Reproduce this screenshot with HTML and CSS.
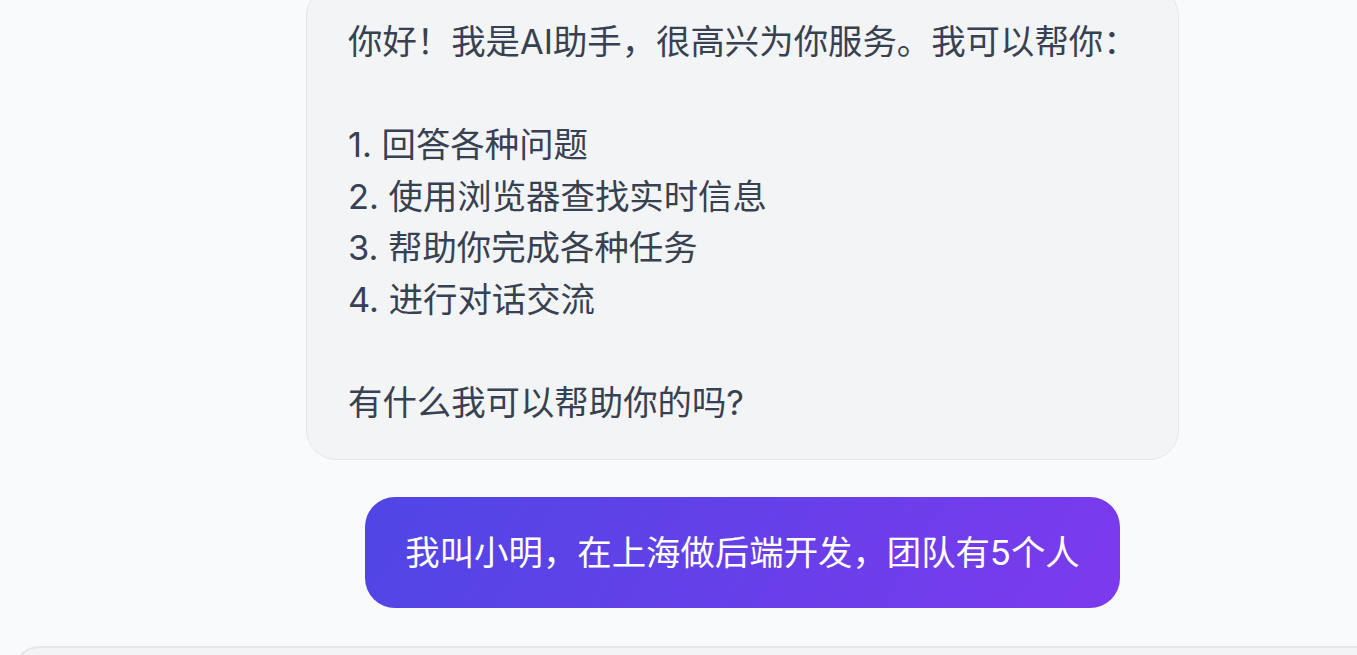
FILE: index.html
```html
<!DOCTYPE html>
<html lang="zh-CN">
<head>
<meta charset="utf-8">
<title>Chat</title>
<link rel="stylesheet" href="styles.css">
</head>
<body>
<div class="page">
  <div class="messages">
    <div class="bubble assistant">
      <p>你好！我是AI助手，很高兴为你服务。我可以帮你：</p>
      <p class="blank">&nbsp;</p>
      <p>1. 回答各种问题</p>
      <p>2. 使用浏览器查找实时信息</p>
      <p>3. 帮助你完成各种任务</p>
      <p>4. 进行对话交流</p>
      <p class="blank">&nbsp;</p>
      <p>有什么我可以帮助你的吗?</p>
    </div>
    <div class="bubble user">
      <p>我叫小明，在上海做后端开发，团队有5个人</p>
    </div>
  </div>
  <div class="composer"></div>
</div>
</body>
</html>
```

FILE: styles.css
```css
html, body {
  margin: 0;
  padding: 0;
  height: 655px;
  overflow: hidden;
  background: #f9fafb;
}

body {
  font-family: "Inter", "Noto Sans CJK SC", sans-serif;
  font-size: 34.4px;
  line-height: 1.5;
  color: #374151;
}

.page {
  display: flex;
  flex-direction: column;
}

.messages {
  width: 873px;
  margin-left: 306px;
  margin-top: -14px;
  display: flex;
  flex-direction: column;
  align-items: center;
  gap: 37px;
}

.bubble p {
  margin: 0;
}

.bubble.assistant {
  box-sizing: border-box;
  width: 873px;
  background: #f3f4f6;
  border: 1.5px solid #e5e7eb;
  border-radius: 30px;
  padding: 29px 12px 30px 41px;
}

.bubble.assistant p {
  white-space: nowrap;
}

.bubble.user {
  background: linear-gradient(120deg, #4f46e5 0%, #7c3aed 100%);
  color: #ffffff;
  border-radius: 30px;
  padding: 30px 40px;
  white-space: nowrap;
}

.composer {
  flex: none;
  margin-top: 38px;
  margin-left: 12px;
  width: 1420px;
  height: 120px;
  box-sizing: border-box;
  background: #f3f4f6;
  border: 2px solid #e5e7eb;
  border-radius: 28px;
}
```
